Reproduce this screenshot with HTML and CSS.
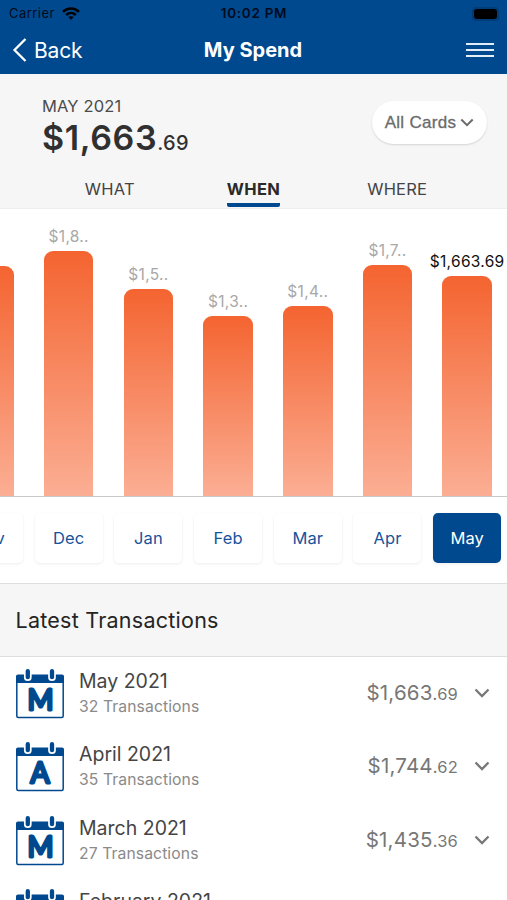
FILE: index.html
```html
<!DOCTYPE html>
<html lang="en">
<head>
<meta charset="utf-8">
<title>My Spend</title>
<link rel="stylesheet" href="styles.css">
</head>
<body>
<svg class="defs" width="0" height="0" aria-hidden="true">
  <symbol id="chevron" viewBox="0 0 16 10"><path d="M1.500 1.500 8 8l6.500-6.500" fill="none" stroke="currentColor" stroke-width="2.300"/></symbol>
  <symbol id="calendar" viewBox="0 0 50 52">
    <path d="M3 6.500h44a2 2 0 0 1 2 2V15H1V8.500a2 2 0 0 1 2-2z" fill="#00498f"/>
    <rect x="1.800" y="8" width="46.400" height="41.500" rx="1.500" fill="none" stroke="#00498f" stroke-width="1.500"/>
    <g fill="#00498f" stroke="#fff" stroke-width="1.700"><rect x="9.800" y="0.200" width="6" height="12" rx="3"/><rect x="34" y="0.200" width="6" height="12" rx="3"/></g>
  </symbol>
</svg>
<header class="header">
  <div class="status">
    <div class="carrier"><span>Carrier</span>
      <svg width="18" height="13" viewBox="0 0 18 13"><g fill="none" stroke="#000" stroke-width="2.500"><path d="M1 4.900C5.500.5 12.500.5 17 4.900"/><path d="M4.200 8c2.800-2.600 6.800-2.600 9.600 0"/></g><path d="M6.300 10.100c1.600-1.300 3.800-1.300 5.400 0L9 12.800z"/></svg>
    </div>
    <time>10:02 PM</time>
    <div class="battery"><i></i></div>
  </div>
  <nav class="nav">
    <div class="back"><svg width="15" height="26" viewBox="0 0 15 26"><path d="M13.500 2 2.500 13l11 11" fill="none" stroke="#fff" stroke-width="2.300"/></svg><span>Back</span></div>
    <h1>My Spend</h1>
    <div class="menu"><i></i><i></i><i></i></div>
  </nav>
</header>
<section class="summary">
  <div class="overview">
    <div class="total"><div class="period">MAY 2021</div><div class="sum">$1,663<small>.69</small></div></div>
    <div class="cards"><span>All Cards</span><svg width="14" height="9"><use href="#chevron"/></svg></div>
  </div>
  <div class="tabs"><div><span>WHAT</span></div><div class="active"><span>WHEN</span></div><div><span>WHERE</span></div></div>
</section>
<section class="chart">
  <div class="columns">
    <div class="column"><div class="bar" style="height:230px"></div></div>
    <div class="column"><span>$1,8..</span><div class="bar" style="height:245px"></div></div>
    <div class="column"><span>$1,5..</span><div class="bar" style="height:207px"></div></div>
    <div class="column"><span>$1,3..</span><div class="bar" style="height:180px"></div></div>
    <div class="column"><span>$1,4..</span><div class="bar" style="height:190px"></div></div>
    <div class="column"><span>$1,7..</span><div class="bar" style="height:231px"></div></div>
    <div class="column current"><span>$1,663.69</span><div class="bar" style="height:220px"></div></div>
  </div>
  <div class="months"><div><span>Nov</span></div><div><span>Dec</span></div><div><span>Jan</span></div><div><span>Feb</span></div><div><span>Mar</span></div><div><span>Apr</span></div><div class="selected"><span>May</span></div></div>
</section>
<h2>Latest Transactions</h2>
<main class="list">
  <div class="row">
    <svg class="cal" width="50" height="52"><use href="#calendar"/><text x="25.500" y="41.500">M</text></svg>
    <div class="info"><div class="name">May 2021</div><div class="count">32 Transactions</div></div>
    <div class="amount">$1,663<small>.69</small></div><svg class="more" width="16" height="10"><use href="#chevron"/></svg>
  </div>
  <div class="row">
    <svg class="cal" width="50" height="52"><use href="#calendar"/><text x="25" y="41.500">A</text></svg>
    <div class="info"><div class="name">April 2021</div><div class="count">35 Transactions</div></div>
    <div class="amount">$1,744<small>.62</small></div><svg class="more" width="16" height="10"><use href="#chevron"/></svg>
  </div>
  <div class="row">
    <svg class="cal" width="50" height="52"><use href="#calendar"/><text x="25.500" y="41.500">M</text></svg>
    <div class="info"><div class="name">March 2021</div><div class="count">27 Transactions</div></div>
    <div class="amount">$1,435<small>.36</small></div><svg class="more" width="16" height="10"><use href="#chevron"/></svg>
  </div>
  <div class="row">
    <svg class="cal" width="50" height="52"><use href="#calendar"/></svg>
    <div class="info"><div class="name">February 2021</div></div>
  </div>
</main>
</body>
</html>
```
FILE: styles.css
```css
* { box-sizing: border-box; }
html { overflow: hidden; }
body { margin: 0; width: 507px; height: 900px; overflow: hidden; background: #fff; color: #333; font-family: Inter, "Liberation Sans", sans-serif; display: flex; flex-direction: column; }
body > * { flex-shrink: 0; }
svg { display: block; flex-shrink: 0; }
.defs { position: absolute; }
.header { height: 74px; background: #00498f; }
.status { height: 27px; padding: 0 8px 0 9px; display: grid; grid-template-columns: 1fr auto 1fr; align-items: center; color: #000b20; font-size: 13px; line-height: 27px; }
.carrier { display: flex; align-items: center; gap: 7px; letter-spacing: .45px; }
.status time { font-weight: 600; font-size: 13.5px; letter-spacing: .7px; }
.battery { justify-self: end; width: 27px; height: 14px; padding: 2px; border-radius: 4px; background: #003c78; }
.battery i { display: block; height: 10px; width: 23px; border-radius: 3px; background: #000; }
.nav { height: 47px; padding: 0 13px 1px 12px; display: grid; grid-template-columns: 1fr auto 1fr; align-items: center; color: #fff; }
.back { display: flex; align-items: center; gap: 7px; font-size: 21px; letter-spacing: -.2px; }
h1 { margin: 0; font-size: 20px; font-weight: 700; letter-spacing: 0; }
.menu { justify-self: end; width: 28px; display: grid; gap: 4px; }
.menu i { height: 2px; background: #e2edf7; }
.summary { height: 135px; background: #f6f6f6; border-bottom: 1px solid #eee; }
.overview { height: 95px; padding: 22px 20px 0 42px; display: flex; justify-content: space-between; }
.period { font-size: 16.5px; line-height: 21px; letter-spacing: .15px; color: #4b4b4b; }
.sum { font-size: 34px; font-weight: 600; line-height: 41px; letter-spacing: .6px; white-space: nowrap; color: #303030; }
.sum small { font-size: 20px; font-weight: 500; letter-spacing: .4px; }
.cards { width: 115px; height: 43px; margin-top: 5px; border-radius: 22px; background: #fff; box-shadow: 0 1px 2px rgba(0,0,0,.14); display: flex; align-items: center; justify-content: center; gap: 4px; color: #6b6b6b; font: 500 17px "Liberation Sans", sans-serif; letter-spacing: .3px; -webkit-text-stroke: .3px currentColor; }
.tabs { height: 39px; padding: 0 38px; display: grid; grid-template-columns: repeat(3, 1fr); text-align: center; font-size: 16.5px; line-height: 41px; color: #444; letter-spacing: .2px; }
.tabs span { display: inline-block; height: 38px; }
.tabs .active span { font-weight: 700; color: #2a2a2a; background: linear-gradient(#00498f,#00498f) 0 100% / 100% 4px no-repeat; border-radius: 2px; letter-spacing: .4px; }
.chart { height: 374px; overflow: hidden; }
.columns { height: 288px; display: flex; justify-content: flex-end; border-bottom: 1px solid #c9c9c9; }
.column { flex: 0 0 79.7px; display: flex; flex-direction: column; align-items: center; justify-content: flex-end; font-size: 15.5px; line-height: 19px; letter-spacing: .3px; color: #a8a8a8; }
.column span { margin-bottom: 5px; }
.column.current { color: #111; }
.bar { width: 49.5px; border-radius: 9px 9px 0 0; background: linear-gradient(#f46430, #fbae94); }
.months { display: flex; justify-content: flex-end; padding-top: 16px; }
.months div { flex: 0 0 79.7px; display: flex; justify-content: center; }
.months span { width: 68px; height: 49.5px; border-radius: 5px; text-align: center; line-height: 50px; font-size: 16.5px; letter-spacing: .1px; color: #15549b; box-shadow: 0 1px 3px rgba(0,0,0,.08); }
.months .selected span { background: #00498f; color: #fff; }
h2 { margin: 0; height: 74px; padding-left: 15.5px; border: 1px solid #dedede; border-width: 1px 0; background: #f6f6f6; color: #242424; font-size: 21.5px; font-weight: 400; line-height: 72px; letter-spacing: .25px; }
.row { height: 73.4px; padding: 11px 17px 0 15px; display: flex; }
.cal text { font: 400 28px Lato, sans-serif; fill: #00498f; stroke: #00498f; stroke-width: 3px; stroke-linejoin: round; text-anchor: middle; }
.info { margin-left: 14px; flex: 1; }
.name { font-size: 19.5px; line-height: 26px; color: #454545; letter-spacing: 0; }
.count { font-size: 15.7px; line-height: 26px; color: #8a8a8a; letter-spacing: .1px; }
.amount { padding-top: 11px; font-size: 20.5px; line-height: 28px; color: #777; letter-spacing: .2px; }
.amount small { font-size: 16.5px; }
.more { margin: 20px 0 0 16px; color: #777; }
```
